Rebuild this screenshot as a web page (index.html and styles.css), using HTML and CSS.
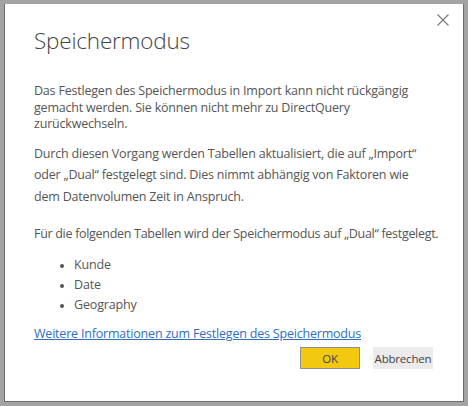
FILE: index.html
```html
<!DOCTYPE html>
<html lang="de">
<head>
<meta charset="utf-8">
<link rel="stylesheet" href="styles.css">
</head>
<body>
<div class="dialog">
  <button class="close" aria-label="Schließen">
    <svg width="12" height="12" viewBox="0 0 12 12"><path d="M0.5 0.5 L11.5 11.5 M11.5 0.5 L0.5 11.5" stroke="#777" stroke-width="1.1" fill="none"/></svg>
  </button>
  <h1 class="title">Speichermodus</h1>
  <p class="p1">Das Festlegen des Speichermodus in Import kann nicht rückgängig gemacht werden. Sie können nicht mehr zu DirectQuery zurückwechseln.</p>
  <p class="p2">Durch diesen Vorgang werden Tabellen aktualisiert, die auf „Import“ oder „Dual“ festgelegt sind. Dies nimmt abhängig von Faktoren wie dem Datenvolumen Zeit in Anspruch.</p>
  <p class="p3">Für die folgenden Tabellen wird der Speichermodus auf „Dual“ festgelegt.</p>
  <ul class="list">
    <li>Kunde</li>
    <li>Date</li>
    <li>Geography</li>
  </ul>
  <a class="link" href="#">Weitere Informationen zum Festlegen des Speichermodus</a>
  <div class="actions">
    <button class="btn ok">OK</button>
    <button class="btn cancel">Abbrechen</button>
  </div>
</div>
</body>
</html>
```
FILE: styles.css
```css
html, body {
  margin: 0;
  padding: 0;
}
body {
  background: #a3a3a3;
  width: 468px;
  height: 406px;
  padding: 4px;
  box-sizing: border-box;
  font-family: "Open Sans", "Noto Sans", sans-serif;
}
.dialog {
  position: relative;
  background: #fff;
  width: 460px;
  height: 398px;
  box-sizing: border-box;
  border-left: 1px solid #6e6e6e;
  border-right: 1px solid #6e6e6e;
  border-bottom: 1px solid #6e6e6e;
  padding: 19px 30px 0 29px;
  color: #555;
}
.close {
  position: absolute;
  top: 6px;
  right: 10px;
  width: 20px;
  height: 20px;
  padding: 0;
  border: 0;
  background: transparent;
  display: flex;
  align-items: center;
  justify-content: center;
}
.title {
  margin: 0;
  font-weight: 300;
  font-size: 22.5px;
  line-height: 36px;
  color: #444;
  letter-spacing: -0.2px;
}
p {
  margin: 0;
  font-size: 12.5px;
  letter-spacing: -0.2px;
}
.p1 {
  margin-top: 24px;
  line-height: 16.5px;
}
.p2 {
  margin-top: 10px;
  line-height: 21.5px;
}
.p3 {
  margin-top: 17px;
  line-height: 20px;
  white-space: nowrap;
  letter-spacing: -0.3px;
}
.list {
  margin: 11px 0 0 0;
  padding: 0 0 0 40px;
  font-size: 12.5px;
  line-height: 20px;
  letter-spacing: -0.15px;
}
.list li::marker {
  font-size: 10px;
}
.link {
  display: block;
  margin-top: 10px;
  font-size: 12.5px;
  line-height: 17px;
  letter-spacing: -0.2px;
  color: #2e6ec2;
  text-decoration: underline;
  width: max-content;
}
.actions {
  display: flex;
  justify-content: flex-end;
  gap: 13px;
  margin-top: 5px;
  padding-right: 0;
}
.btn {
  font-family: inherit;
  font-size: 11.5px;
  height: 22px;
  width: 60px;
  padding: 0;
  color: #444;
  box-sizing: border-box;
  letter-spacing: -0.2px;
}
.ok {
  background: #f2c811;
  border: 1px solid #8f8f8f;
}
.cancel {
  background: #ebebeb;
  border: 1px solid #ebebeb;
}
```
